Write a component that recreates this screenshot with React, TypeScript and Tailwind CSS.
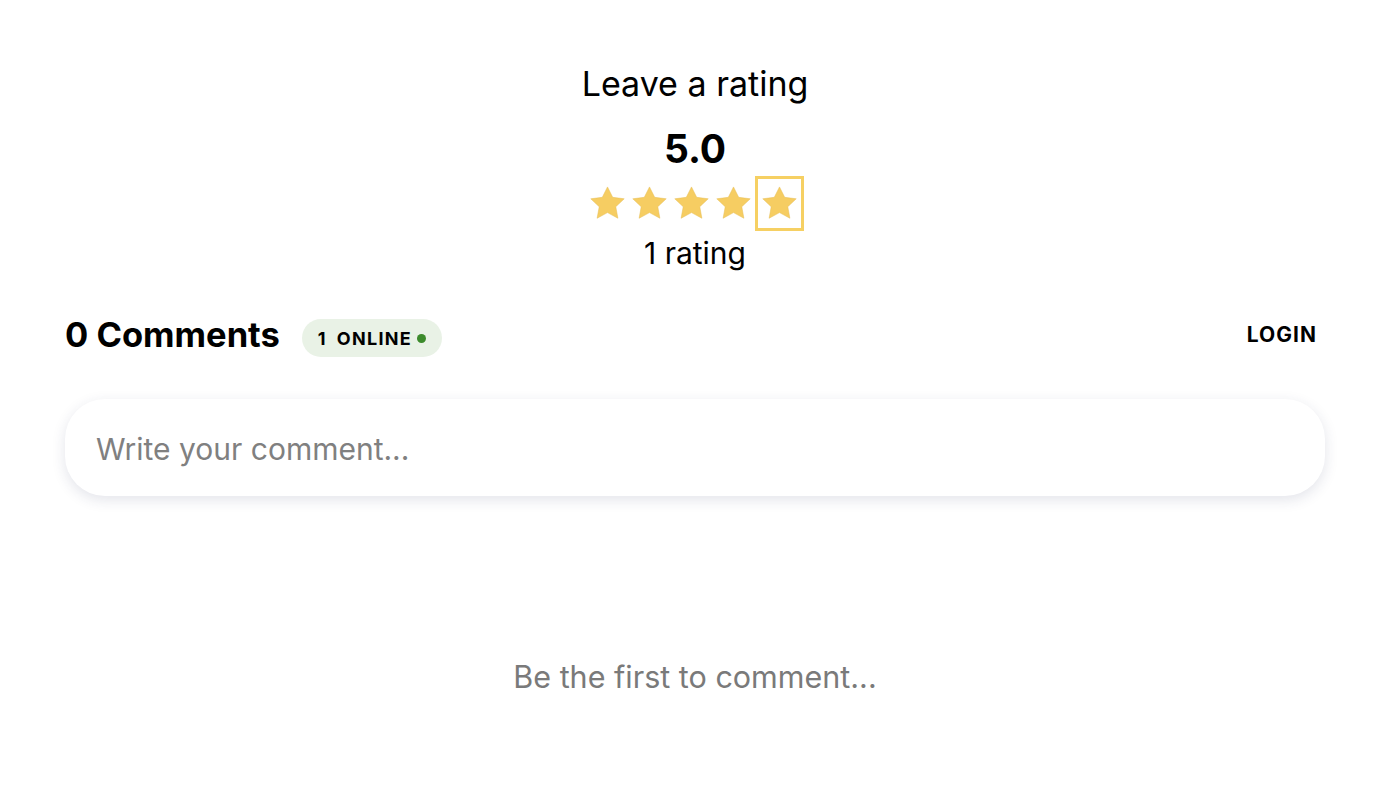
const Star = () => (
  <svg viewBox="0 0 24 24" className="h-[39px] w-[39px]">
    <polygon
      points="12,1.8 15.2,8.2 22.3,9.1 17.1,14 18.4,21.1 12,17.6 5.6,21.1 6.9,14 1.7,9.1 8.8,8.2"
      fill="#f6cd62"
      stroke="#e7bc52"
      strokeWidth="0.3"
      strokeLinejoin="round"
    />
  </svg>
);

const App = () => {
  const font = { fontFamily: "Inter, 'Liberation Sans', sans-serif" };
  return (
    <div className="min-h-screen bg-white text-black" style={font}>
      <div className="px-[65px]">
        {/* Rating */}
        <div className="flex flex-col items-center pt-[64px]">
          <h2 className="text-[34px] leading-[40px] font-normal">Leave a rating</h2>
          <div className="mt-[23px] text-[39px] leading-[44px] font-bold">5.0</div>
          <div className="mt-[5px] flex items-center">
            {[0, 1, 2, 3].map((i) => (
              <div key={i} className="flex h-[48px] w-[42px] items-center justify-center">
                <Star />
              </div>
            ))}
            <div className="flex h-[55px] w-[49px] items-center justify-center border-[3px] border-[#f6d063]">
              <Star />
            </div>
          </div>
          <div className="mt-[4px] text-[30px] leading-[36px]">1 rating</div>
        </div>

        {/* Comments header */}
        <div className="mt-[42px] flex items-center justify-between">
          <div className="flex items-center">
            <h3 className="text-[34.5px] leading-[40px] font-bold">0 Comments</h3>
            <span className="ml-[22px] mt-[6px] flex h-[38px] items-center rounded-full bg-[#e9f2e6] pl-[16px] pr-[16px] text-[18px] font-bold tracking-[0.07em]">
              <span>1</span>
              <span className="ml-[10px]">ONLINE</span>
              <span className="ml-[5px] h-[9px] w-[9px] rounded-full bg-[#3c8b2c]" />
            </span>
          </div>
          <button className="mr-[8px] text-[21px] font-bold tracking-[0.05em]">LOGIN</button>
        </div>

        {/* Input */}
        <div className="mt-[42px] flex h-[97px] items-center rounded-[40px] bg-white px-[31px] pt-[4px] shadow-[0_4px_14px_rgba(40,50,90,0.13)]">
          <input
            className="w-full bg-transparent text-[30px] text-black outline-none placeholder:text-[#808080]"
            placeholder="Write your comment..."
          />
        </div>

        {/* Empty state */}
        <div className="mt-[163px] text-center text-[30.5px] leading-[36px] text-[#7a7a7a]">
          Be the first to comment...
        </div>
      </div>
    </div>
  );
};

export default App;
